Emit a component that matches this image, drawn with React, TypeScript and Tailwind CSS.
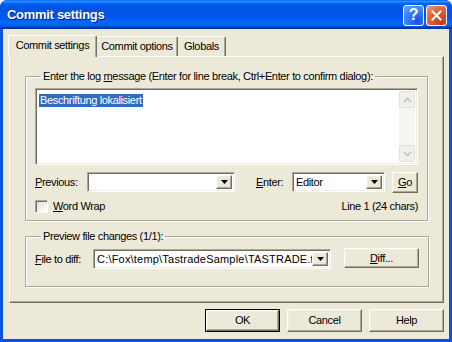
import React from 'react'

const font = "font-['Liberation_Sans',Arial,sans-serif]"

const Ul = ({ children }: { children: React.ReactNode }) => <span className="underline underline-offset-[1px]">{children}</span>

const DropBtn = () => (
  <div className="w-[16px] h-full bg-[#ece9d8] border border-t-white border-l-white border-r-[#716f64] border-b-[#716f64] shadow-[inset_-1px_-1px_0_#aca899,inset_1px_1px_0_#f1efe2] flex items-center justify-center">
    <svg width="7" height="4" viewBox="0 0 7 4">
      <polygon points="0,0 7,0 3.5,4" fill="#000" />
    </svg>
  </div>
)

const Combo = ({ w, text, wide }: { w: string; text?: string; wide?: boolean }) => (
  <div className={`${w} h-[20px] bg-white border border-t-[#aca899] border-l-[#aca899] border-r-white border-b-white shadow-[inset_1px_1px_0_#716f64,inset_-1px_-1px_0_#f1efe2] flex items-stretch p-[2px]`}>
    <div className={`flex-1 overflow-hidden whitespace-nowrap pl-[1px] leading-[14px] ${wide ? 'tracking-[0.2px]' : ''}`}>{text}</div>
    <DropBtn />
  </div>
)

const Btn = ({ w, h, children, def }: { w: string; h: string; children: React.ReactNode; def?: boolean }) => (
  <div className={`${w} ${h} ${def ? 'border border-black' : ''}`}>
    <div className="w-full h-full bg-[#ece9d8] border border-t-white border-l-white border-r-[#716f64] border-b-[#716f64] shadow-[inset_-1px_-1px_0_#aca899,inset_1px_1px_0_#f1efe2] flex items-center justify-center">
      {children}
    </div>
  </div>
)

const Chevron = ({ up }: { up?: boolean }) => (
  <div className="h-[17px] w-full border border-[#e3e2da] rounded-[2px] bg-[#f1f0ea] flex items-center justify-center">
    <svg width="9" height="6" viewBox="0 0 9 6">
      <polyline points={up ? '1,5 4.5,1.5 8,5' : '1,1 4.5,4.5 8,1'} fill="none" stroke="#c4c3b9" strokeWidth="1.6" />
    </svg>
  </div>
)

export default function App() {
  return (
    <div className={`${font} text-[11px] tracking-[-0.35px] text-black w-[452px] h-[342px] bg-[#0855dd] rounded-t-[7px] flex flex-col overflow-hidden`}>
      {/* Title bar */}
      <div className="h-[29px] flex items-center justify-between pl-[7px] pr-[5px] bg-[linear-gradient(to_bottom,#0058ee_0%,#3593ff_4%,#288eff_6%,#127dff_8%,#036ffc_10%,#0262ee_14%,#0057e5_20%,#0054e3_24%,#0055eb_56%,#005bf5_66%,#026afe_76%,#0062ef_86%,#0052d6_92%,#0040ab_94%,#003092_100%)]">
        <span className="text-white font-bold text-[13px] tracking-[-0.3px] [text-shadow:1px_1px_0_#0a1883] mt-[1px]">Commit settings</span>
        <div className="flex gap-[2px] mt-[1px]">
          <div className="w-[21px] h-[21px] rounded-[3px] border border-white bg-[radial-gradient(circle_at_70%_80%,#1b4fe0_0%,#3c7ffb_55%,#6ea2ff_100%)] flex items-center justify-center text-white font-bold text-[16px] leading-none">?</div>
          <div className="w-[21px] h-[21px] rounded-[3px] border border-white bg-[radial-gradient(circle_at_80%_85%,#c43b1a_0%,#e35d3a_55%,#f19a82_100%)] flex items-center justify-center">
            <svg width="11" height="11" viewBox="0 0 11 11">
              <path d="M1.5 1.5 L9.5 9.5 M9.5 1.5 L1.5 9.5" stroke="#fff" strokeWidth="2" strokeLinecap="square" />
            </svg>
          </div>
        </div>
      </div>

      {/* Body */}
      <div className="flex-1 mx-[3px] mb-[3px] bg-[#ece9d8] pt-[6px] px-[5px] flex flex-col">
        {/* Tabs */}
        <div className="flex items-end h-[22px] relative z-10 -mb-[1px]">
          <div className="h-[22px] w-[89px] px-[2px] bg-[#ece9d8] border border-b-0 border-t-white border-l-white border-r-[#716f64] rounded-t-[2px] shadow-[inset_-1px_0_0_#aca899] flex items-center justify-center pb-[3px]">Commit settings</div>
          <div className="h-[20px] w-[81px] bg-[#ece9d8] border border-b-0 border-t-white border-l-0 border-r-[#716f64] rounded-tr-[2px] shadow-[inset_-1px_0_0_#aca899] flex items-center justify-center pb-[1px] mb-[1px]">Commit options</div>
          <div className="h-[20px] w-[48px] bg-[#ece9d8] border border-b-0 border-t-white border-l-0 border-r-[#716f64] rounded-tr-[2px] shadow-[inset_-1px_0_0_#aca899] flex items-center justify-center pb-[1px] mb-[1px]">Globals</div>
        </div>

        {/* Tab panel */}
        <div className="ml-[1px] w-[435px] h-[247px] border border-t-white border-l-white border-r-[#716f64] border-b-[#716f64] shadow-[inset_-1px_-1px_0_#aca899] pl-[15px]">
          <fieldset className="mt-[13px] w-[403px] h-[151px] border border-[#aca899] shadow-[1px_1px_0_#fff,inset_1px_1px_0_#fff] px-[9px] pt-[5px]">
            <legend className="ml-[6px] px-[2px] leading-[13px]">Enter the log <Ul>m</Ul>essage (Enter for line break, Ctrl+Enter to confirm dialog):</legend>
            <div className="w-[383px] h-[77px] bg-white border border-t-[#aca899] border-l-[#aca899] border-r-white border-b-white shadow-[inset_1px_1px_0_#716f64,inset_-1px_-1px_0_#f1efe2] flex p-[2px]">
              <div className="flex-1 pt-[1px] pl-[1px]">
                <span className="bg-[#316ac5] text-white px-[1px] leading-[13px] inline-block">Beschriftung lokalisiert</span>
              </div>
              <div className="w-[16px] bg-[#f6f5f1] flex flex-col justify-between">
                <Chevron up />
                <Chevron />
              </div>
            </div>
            <div className="flex items-center mt-[7px] h-[20px]">
              <span className="w-[52px]"><Ul>P</Ul>revious:</span>
              <Combo w="w-[148px]" />
              <span className="ml-[21px] w-[36px]"><Ul>E</Ul>nter:</span>
              <Combo w="w-[93px]" text="Editor" />
              <div className="ml-[7px]">
                <Btn w="w-[26px]" h="h-[21px]"><Ul>G</Ul>o</Btn>
              </div>
            </div>
            <div className="flex items-center justify-between mt-[7px] h-[14px]">
              <div className="flex items-center">
                <div className="w-[13px] h-[13px] bg-[linear-gradient(135deg,#dcdbd5,#fff)] border border-t-[#aca899] border-l-[#aca899] border-r-white border-b-white shadow-[inset_1px_1px_0_#716f64]" />
                <span className="ml-[5px]"><Ul>W</Ul>ord Wrap</span>
              </div>
              <span>Line 1 (24 chars)</span>
            </div>
          </fieldset>

          <fieldset className="mt-[9px] w-[403px] h-[57px] border border-[#aca899] shadow-[1px_1px_0_#fff,inset_1px_1px_0_#fff] px-[9px] pt-[6px]">
            <legend className="ml-[6px] px-[2px] leading-[13px]">Preview file changes (1/1):</legend>
            <div className="flex items-center h-[20px]">
              <span className="w-[58px]"><Ul>F</Ul>ile to diff:</span>
              <Combo w="w-[238px]" text="C:\Fox\temp\TastradeSample\TASTRADE.tsk" wide />
              <div className="ml-[13px] -mt-[2px]">
                <Btn w="w-[75px]" h="h-[20px]"><Ul>D</Ul>iff...</Btn>
              </div>
            </div>
          </fieldset>
        </div>

        {/* Dialog buttons */}
        <div className="flex justify-end gap-[7px] mt-[6px] w-[436px]">
          <Btn w="w-[75px]" h="h-[23px]" def>OK</Btn>
          <Btn w="w-[75px]" h="h-[23px]">Cancel</Btn>
          <Btn w="w-[75px]" h="h-[23px]">Help</Btn>
        </div>
      </div>
    </div>
  )
}
